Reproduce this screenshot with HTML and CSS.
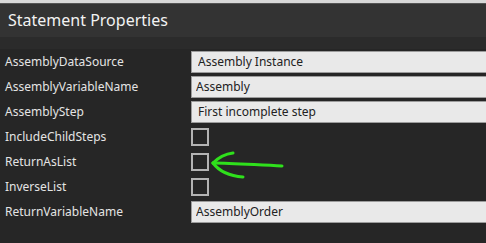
FILE: index.html
```html
<!DOCTYPE html>
<html lang="en">
<head>
    <meta charset="UTF-8">
    <meta name="viewport" content="width=device-width, initial-scale=1.0">
    <title>Statement Properties</title>
    <link rel="stylesheet" href="styles.css">
</head>
<body>

    <div class="panel">
        <div class="panel-title">Statement Properties</div>
        <div class="panel-sub"></div>

        <div class="props">
            <label class="prop-name">AssemblyDataSource</label>
            <input class="prop-text" type="text" value="Assembly Instance">

            <label class="prop-name">AssemblyVariableName</label>
            <input class="prop-text tight" type="text" value="Assembly">

            <label class="prop-name">AssemblyStep</label>
            <input class="prop-text" type="text" value="First incomplete step">

            <label class="prop-name">IncludeChildSteps</label>
            <input class="prop-check" type="checkbox">

            <label class="prop-name">ReturnAsList</label>
            <div class="check-cell">
                <input class="prop-check" type="checkbox">
                <!-- hand drawn marker -->
                <svg class="marker" width="80" height="40" viewBox="0 0 80 40">
                    <path d="M6 19 C 25 19, 50 21, 75 22" />
                    <path d="M6 19 C 11 14, 18 10, 26 9" />
                    <path d="M6 19 C 12 27, 22 32, 36 33" />
                </svg>
            </div>

            <label class="prop-name">InverseList</label>
            <input class="prop-check" type="checkbox">

            <label class="prop-name">ReturnVariableName</label>
            <input class="prop-text tight" type="text" value="AssemblyOrder">
        </div>
    </div>

</body>
</html>
```

FILE: styles.css
```css
html, body {
    margin: 0;
    padding: 0;
    background-color: #262626;
    overflow: hidden;
}

body {
    font-family: "Noto Sans", "Open Sans", sans-serif;
    color: #e6e6e6;
    border-top: 3px solid #d8d8d8;
}

.panel-title {
    height: 33px;
    line-height: 33px;
    background-color: #333333;
    border-top: 1px solid #555;
    padding-left: 8px;
    font-size: 16px;
    color: #f2f2f2;
}

.panel-sub {
    height: 12px;
    background-color: #2b2b2b;
}

.props {
    display: grid;
    grid-template-columns: 191px 1fr;
    grid-auto-rows: 25px;
    align-items: center;
}

.prop-name {
    padding-left: 5px;
    font-size: 12px;
    color: #e4e4e4;
}

.prop-text {
    box-sizing: border-box;
    width: 100%;
    height: 22px;
    margin: 0;
    padding: 0 0 0 6px;
    border: 1px solid #9c9c9c;
    border-right: none;
    background-color: #e9e9e9;
    font-family: "Noto Sans", "Open Sans", sans-serif;
    font-size: 12px;
    color: #222;
    outline: none;
}

.prop-text.tight {
    padding-left: 4px;
}

.prop-check {
    appearance: none;
    -webkit-appearance: none;
    box-sizing: border-box;
    width: 18px;
    height: 18px;
    margin: 0;
    border: 2px solid #b4b4b4;
    background: transparent;
}

.check-cell {
    position: relative;
    height: 18px;
}

.marker {
    position: absolute;
    left: 16px;
    top: -9px;
    fill: none;
    stroke: #2fe01c;
    stroke-width: 3;
    stroke-linecap: round;
}
```
